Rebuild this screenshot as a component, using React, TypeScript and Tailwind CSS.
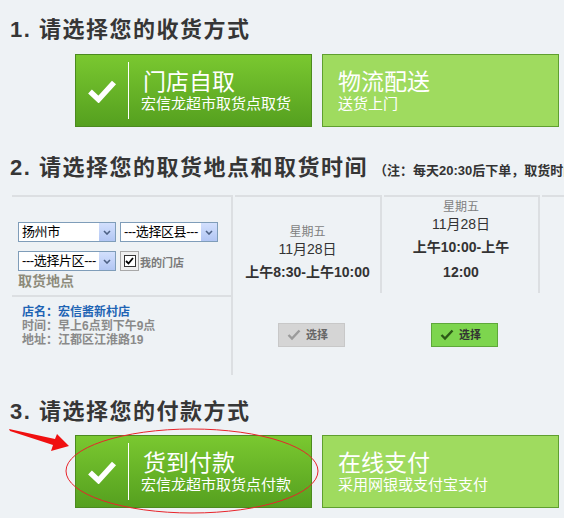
import React from 'react';

type CardProps = { active?: boolean; title: string; sub: string };

const BigCheck = () => (
  <svg width="30" height="24" viewBox="0 0 30 24">
    <path d="M3 12.5 L11.5 20.5 L27 3.5" fill="none" stroke="#fff" strokeWidth="5.5" />
  </svg>
);

const OptionCard: React.FC<CardProps> = ({ active, title, sub }) =>
  active ? (
    <div className="w-[237px] h-[73px] border border-[#4b8a1f] bg-linear-to-b from-[#7ac830] to-[#55a01f] flex items-center text-white">
      <div className="w-[52px] flex justify-center">
        <BigCheck />
      </div>
      <div className="w-px self-stretch my-[7px] bg-white" />
      <div className="pl-[12px]">
        <div className="text-[23px] leading-[26px] pl-[2px]">{title}</div>
        <div className="text-[15px] leading-[18px]">{sub}</div>
      </div>
    </div>
  ) : (
    <div className="w-[237px] h-[73px] border border-[#5f9f2f] bg-[#9fdb5f] flex items-center text-white">
      <div className="pl-[15px]">
        <div className="text-[23px] leading-[26px]">{title}</div>
        <div className="text-[15px] leading-[18px]">{sub}</div>
      </div>
    </div>
  );

const Heading: React.FC<{ num: string; text: string; children?: React.ReactNode }> = ({ num, text, children }) => (
  <div className="flex items-baseline h-[30px] leading-[30px] whitespace-nowrap">
    <span className="text-[22px] font-bold text-[#363636] tracking-[1.5px]">
      {num} {text}
    </span>
    {children}
  </div>
);

const FakeSelect: React.FC<{ label: string }> = ({ label }) => (
  <div className="w-[98px] h-[20px] border border-[#7f9db9] bg-white flex items-center">
    <span className="flex-1 pl-[3px] text-[13px] leading-[18px] tracking-[-0.4px] text-black whitespace-nowrap overflow-hidden">
      {label}
    </span>
    <span className="w-[16px] h-[18px] bg-linear-to-b from-[#d3e0fd] to-[#b2c6f3] flex items-center justify-center">
      <svg width="8" height="5" viewBox="0 0 8 5">
        <path d="M1 1 L4 4 L7 1" fill="none" stroke="#4d6185" strokeWidth="1.6" />
      </svg>
    </span>
  </div>
);

const PickButton: React.FC<{ active?: boolean }> = ({ active }) => (
  <div
    className={
      active
        ? 'w-[67px] h-[24px] border border-[#5ea83a] bg-[#7dd54e] flex items-center pl-[8px] text-[#333]'
        : 'w-[67px] h-[24px] border border-[#c8c8c8] bg-[#d5d5d5] flex items-center pl-[8px] text-[#666]'
    }
  >
    <svg width="14" height="12" viewBox="0 0 14 12">
      <path d="M1.5 6 L5 9.5 L12.5 1.5" fill="none" stroke={active ? '#2c5a16' : '#9b9b9b'} strokeWidth="2.4" />
    </svg>
    <span className="ml-[5px] text-[11px] font-bold">选择</span>
  </div>
);

const TimeCol: React.FC<{ width: string; lines: string[]; pad: string; active?: boolean }> = ({ width, lines, pad, active }) => (
  <div className={`${width} ml-[2px] flex flex-col`}>
    <div className="h-[98px] border-t-2 border-r-2 border-[#dcdfe2] flex flex-col justify-end items-center pb-[8px] text-[#333]">
      <div className="text-[12px] leading-[17px] text-[#7f7f7f]">星期五</div>
      <div className="text-[14px] leading-[17px]">11月28日</div>
      <div className="mt-[2px] text-center">
        {lines.map((l) => (
          <div key={l} className="text-[14px] font-bold leading-[25px] whitespace-nowrap">
            {l}
          </div>
        ))}
      </div>
    </div>
    <div className={`${pad} mt-[30px]`}>
      <PickButton active={active} />
    </div>
  </div>
);

export default function App() {
  return (
    <div className="relative w-[564px] h-[518px] overflow-hidden bg-[#eef2f5] font-['Liberation_Sans','Noto_Sans_CJK_SC',sans-serif]">
      <div className="pt-[15px] pl-[10px]">
        <Heading num="1." text="请选择您的收货方式" />
        <div className="flex gap-[10px] mt-[9px] ml-[65px]">
          <OptionCard active title="门店自取" sub="宏信龙超市取货点取货" />
          <OptionCard title="物流配送" sub="送货上门" />
        </div>

        <div className="mt-[26px]">
          <Heading num="2." text="请选择您的取货地点和取货时间">
            <span className="ml-[6px] text-[13px] font-bold text-[#333]">（注：每天20:30后下单，取货时间为次日）</span>
          </Heading>
        </div>

        <div className="flex mt-[12px] ml-[2px]">
          <div className="w-[221px] h-[180px] border-t-2 border-r-2 border-[#dcdfe2] flex flex-col">
            <div className="h-[100px] border-b-2 border-[#dcdfe2] pt-[25px] pl-[6px]">
              <div className="flex gap-[4px]">
                <FakeSelect label="扬州市" />
                <FakeSelect label="---选择区县---" />
              </div>
              <div className="flex items-end mt-[9px]">
                <FakeSelect label="---选择片区---" />
                <div className="ml-[4px] w-[19px] h-[20px] border border-[#a8a8a8] bg-[#efefef] flex items-center justify-center">
                  <div className="w-[12px] h-[12px] border border-[#333] bg-white flex items-center justify-center">
                    <svg width="9" height="8" viewBox="0 0 9 8">
                      <path d="M1 4 L3.5 6.5 L8 1" fill="none" stroke="#000" strokeWidth="1.8" />
                    </svg>
                  </div>
                </div>
                <span className="ml-[1px] text-[11px] leading-[15px] font-bold text-[#7a7a7a]">我的门店</span>
              </div>
              <div className="mt-[1px] text-[14px] leading-[18px] font-bold text-[#8d8b7b]">取货地点</div>
            </div>
            <div className="pt-[8px] pl-[10px] text-[12px] leading-[14px] font-bold">
              <div className="text-[#1e64b4]">店名：宏信酱新村店</div>
              <div className="text-[#8a8a8a]">时间：早上6点到下午9点</div>
              <div className="text-[#8a8a8a]">地址：江都区江淮路19</div>
            </div>
          </div>

          <TimeCol width="w-[147px]" lines={['上午8:30-上午10:00']} pad="pl-[43px]" />
          <TimeCol width="w-[156px]" lines={['上午10:00-上午', '12:00']} pad="pl-[47px]" active />
          <div className="ml-[2px] flex-1 h-[98px] border-t-2 border-[#dcdfe2]" />
        </div>

        <div className="mt-[22px]">
          <Heading num="3." text="请选择您的付款方式" />
        </div>
        <div className="flex gap-[10px] mt-[8px] ml-[65px]">
          <OptionCard active title="货到付款" sub="宏信龙超市取货点付款" />
          <OptionCard title="在线支付" sub="采用网银或支付宝支付" />
        </div>
      </div>

      {/* red annotation: arrow + ellipse */}
      <svg className="absolute left-0 top-0 pointer-events-none" width="564" height="518">
        <polygon points="9,429 55,439 57,434 69,446 51,451 53,445 10,431" fill="#f01010" />
        <ellipse cx="192" cy="471" rx="126" ry="42" fill="none" stroke="#e8242b" strokeWidth="1" />
      </svg>
    </div>
  );
}
